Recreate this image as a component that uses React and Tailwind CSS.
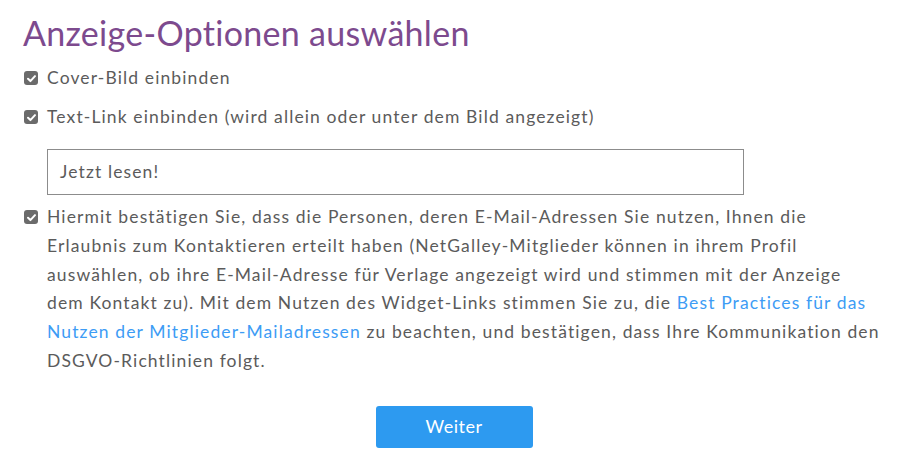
import React from "react";

const Check = () => (
  <span className="flex h-[14px] w-[14px] shrink-0 items-center justify-center rounded-[3px] bg-[#6b6b6b]">
    <svg viewBox="0 0 12 12" className="h-[11px] w-[11px]">
      <path d="M2.2 6.3 L4.8 8.8 L9.8 3.4" fill="none" stroke="#fff" strokeWidth="2.2" strokeLinecap="round" strokeLinejoin="round" />
    </svg>
  </span>
);

const App = () => {
  return (
    <div className="h-[466px] w-[907px] bg-white font-['Lato','Liberation_Sans',sans-serif] text-[#5b5b5b]">
      <div className="pl-[23px] pt-[12px]">
        <h1 className="text-[34px] leading-[42px] text-[#7d4a8e] tracking-[0.3px]">Anzeige-Optionen auswählen</h1>

        {/* options */}
        <div className="mt-[12px] flex items-center gap-[9px] pl-[1px] text-[17.5px] leading-[24px] tracking-[1.12px]">
          <Check />
          <span>Cover-Bild einbinden</span>
        </div>
        <div className="mt-[15px] flex items-center gap-[9px] pl-[1px] text-[17.5px] leading-[24px] tracking-[1.12px]">
          <Check />
          <span>Text-Link einbinden (wird allein oder unter dem Bild angezeigt)</span>
        </div>

        <div className="mt-[20px] pl-[24px]">
          <div className="flex h-[46px] w-[697px] items-center border border-[#8c8c8c] px-[12px] text-[17.5px] tracking-[1.12px]">
            Jetzt lesen!
          </div>
        </div>

        <div className="mt-[8px] flex gap-[9px] pl-[1px]">
          <div className="pt-[7px]">
            <Check />
          </div>
          <p className="whitespace-nowrap text-[17.5px] leading-[28.8px] tracking-[1.12px]">
            Hiermit bestätigen Sie, dass die Personen, deren E-Mail-Adressen Sie nutzen, Ihnen die
            <br />
            Erlaubnis zum Kontaktieren erteilt haben (NetGalley-Mitglieder können in ihrem Profil
            <br />
            auswählen, ob ihre E-Mail-Adresse für Verlage angezeigt wird und stimmen mit der Anzeige
            <br />
            dem Kontakt zu). Mit dem Nutzen des Widget-Links stimmen Sie zu, die{" "}
            <a className="text-[#3d9cf5]">Best Practices für das</a>
            <br />
            <a className="text-[#3d9cf5]">Nutzen der Mitglieder-Mailadressen</a> zu beachten, und bestätigen, dass Ihre Kommunikation den
            <br />
            DSGVO-Richtlinien folgt.
          </p>
        </div>
      </div>

      <div className="mt-[30px] flex justify-center pl-[1px]">
        <button className="h-[42px] w-[157px] rounded-[3px] bg-[#2d9af0] text-[18px] tracking-[0.5px] text-white">Weiter</button>
      </div>
    </div>
  );
};

export default App;
